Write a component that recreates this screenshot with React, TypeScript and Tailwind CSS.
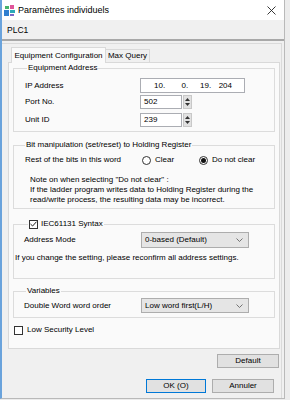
import React from 'react';

function Spin({ value }: { value: string }) {
  return (
    <div className="flex h-[14px]">
      <div className="w-[42px] h-full border border-[#abadb3] bg-white pl-[3px] flex items-center">{value}</div>
      <div className="w-[9px] h-full ml-[1px] bg-[#e1e1e1] border border-[#c8c8c8] flex flex-col items-center justify-center gap-[2px]">
        <svg width="5" height="3" viewBox="0 0 5 3"><path d="M0 3 L2.5 0 L5 3 Z" fill="#333" /></svg>
        <svg width="5" height="3" viewBox="0 0 5 3"><path d="M0 0 L2.5 3 L5 0 Z" fill="#333" /></svg>
      </div>
    </div>
  );
}

function Combo({ value, h = 'h-[16px]' }: { value: string; h?: string }) {
  return (
    <div className={`w-[108px] ${h} bg-[#e5e5e5] border border-[#adadad] flex items-center pl-[3px] pr-[5px]`}>
      <span className="flex-1">{value}</span>
      <svg width="7" height="4" viewBox="0 0 7 4"><polyline points="0.5,0.5 3.5,3.5 6.5,0.5" fill="none" stroke="#555" strokeWidth="0.8" /></svg>
    </div>
  );
}

function Check({ on }: { on: boolean }) {
  return (
    <div className="w-[9px] h-[9px] border border-[#333] bg-white flex items-center justify-center">
      {on && (
        <svg width="7" height="6" viewBox="0 0 7 6"><polyline points="0.5,3 2.6,5 6.5,0.7" fill="none" stroke="#222" strokeWidth="1" /></svg>
      )}
    </div>
  );
}

function Radio({ on }: { on: boolean }) {
  return (
    <div className="w-[9px] h-[9px] rounded-full border border-[#333] bg-white flex items-center justify-center">
      {on && <div className="w-[5px] h-[5px] rounded-full bg-[#111]" />}
    </div>
  );
}

export default function App() {
  const ip = ['10', '0', '19', '204'];
  return (
    <div className="w-[290px] h-[400px] bg-[#ececec] overflow-hidden font-['Liberation_Sans',Arial,sans-serif] text-[8px] leading-[10px] text-black">
      <div className="w-[285px] h-[399px] bg-[#f0f0f0] border-l-2 border-[#6aa3dc] border-r border-r-[#b9b9b9] border-b border-b-[#b9b9b9] flex flex-col">
        {/* title bar */}
        <div className="h-[20px] bg-white flex items-center">
          <svg width="11" height="11" viewBox="0 0 11 11" className="ml-[2px]">
            <rect x="0" y="5" width="5" height="6" fill="#2f7fd0" />
            <rect x="1" y="1" width="4" height="3" fill="#45b36b" />
            <rect x="6" y="0" width="4" height="4" fill="#e0559a" />
            <rect x="6" y="5" width="5" height="3" fill="#2aa9b8" />
            <rect x="6" y="9" width="4" height="2" fill="#7a68c8" />
          </svg>
          <span className="ml-[3px] text-[9px]">Paramètres individuels</span>
          <svg width="9" height="9" viewBox="0 0 9 9" className="ml-auto mr-[8px]">
            <path d="M0.5 0.5 L8.5 8.5 M8.5 0.5 L0.5 8.5" stroke="#222" strokeWidth="0.9" />
          </svg>
        </div>
        {/* PLC1 strip */}
        <div className="h-[19px] flex items-center pl-[5px] text-[8.5px]">PLC1</div>
        <div className="h-[2px] bg-[#a8a8a8]" />

        <div className="mt-[2px] mr-[2px] border-t border-r border-[#dadada] flex-1 flex flex-col pl-[6px] pr-[1px]">
          {/* tabs */}
          <div className="mt-[3px] ml-[3px] flex items-end h-[15px]">
            <div className="w-[95px] h-[16px] bg-[#fafafa] border border-b-0 border-[#d9d9d9] relative z-10 -mb-px flex items-center justify-center">
              Equipment Configuration
            </div>
            <div className="w-[44px] h-[13px] bg-[#f0f0f0] border border-l-0 border-b-0 border-[#d9d9d9] flex items-center justify-center">
              Max Query
            </div>
          </div>

          {/* tab panel */}
          <div className="w-[272px] h-[287px] bg-[#fafafa] border border-[#d9d9d9] pl-[4px] pr-[4px] flex flex-col">
            {/* Equipment Address */}
            <fieldset className="border border-[#dcdcdc] pl-[11px] pb-[4px]">
              <legend className="ml-[2px] px-[1px]">Equipment Address</legend>
              <div className="mt-[5px] flex items-center h-[15px]">
                <span className="w-[115px]">IP Address</span>
                <div className="w-[105px] h-[15px] border border-[#abadb3] bg-white flex items-center pl-[2px]">
                  {ip.map((v, i) => (
                    <div key={i} className="w-[23px] flex justify-end">
                      <span>{v}</span>
                      <span className="w-[3px]">{i < 3 ? '.' : ''}</span>
                    </div>
                  ))}
                </div>
              </div>
              <div className="mt-[2px] flex items-center">
                <span className="w-[115px]">Port No.</span>
                <Spin value="502" />
              </div>
              <div className="mt-[4px] flex items-center">
                <span className="w-[115px]">Unit ID</span>
                <Spin value="239" />
              </div>
            </fieldset>

            {/* Bit manipulation */}
            <fieldset className="mt-[8px] border border-[#dcdcdc] pl-[11px] pb-[3px]">
              <legend className="ml-[0px] px-[1px]">Bit manipulation (set/reset) to Holding Register</legend>
              <div className="mt-[4px] flex items-center h-[12px]">
                <span className="w-[117px]">Rest of the bits in this word</span>
                <Radio on={false} />
                <span className="ml-[4px] w-[44px]">Clear</span>
                <Radio on={true} />
                <span className="ml-[4px]">Do not clear</span>
              </div>
              <div className="mt-[9px] ml-[5px]">
                <div>Note on when selecting "Do not clear" :</div>
                <div>If the ladder program writes data to Holding Register during the</div>
                <div>read/write process, the resulting data may be incorrect.</div>
              </div>
            </fieldset>

            {/* IEC61131 */}
            <fieldset className="mt-[10px] border border-[#dcdcdc] pl-[10px] pb-[15px]">
              <legend className="ml-[4px] px-[1px] flex items-center gap-[3px]">
                <Check on={true} />
                <span>IEC61131 Syntax</span>
              </legend>
              <div className="mt-[3px] flex items-center">
                <span className="w-[117px]">Address Mode</span>
                <Combo value="0-based (Default)" />
              </div>
              <div className="mt-[5px] -ml-[10px] pl-[1px]">If you change the setting, please reconfirm all address settings.</div>
            </fieldset>

            {/* Variables */}
            <fieldset className="mt-[7px] border border-[#dcdcdc] pl-[10px] pb-[4px]">
              <legend className="ml-[2px] px-[1px]">Variables</legend>
              <div className="mt-[2px] flex items-center">
                <span className="w-[117px]">Double Word word order</span>
                <Combo value="Low word first(L/H)" h="h-[15px]" />
              </div>
            </fieldset>

            <div className="mt-[7px] ml-[1px] flex items-center gap-[4px] h-[10px]">
              <Check on={false} />
              <span>Low Security Level</span>
            </div>
          </div>

          {/* buttons */}
          <div className="mt-[5px] flex justify-end pr-[1px]">
            <div className="w-[62px] h-[14px] bg-[#e1e1e1] border border-[#adadad] flex items-center justify-center">Default</div>
          </div>
          <div className="mt-[11px] flex pl-[138px] gap-[6px]">
            <div className="w-[60px] h-[14px] bg-[#e1e1e1] border border-[#0078d7] flex items-center justify-center">OK (O)</div>
            <div className="w-[62px] h-[14px] bg-[#e1e1e1] border border-[#adadad] flex items-center justify-center">Annuler</div>
          </div>
        </div>
      </div>
    </div>
  );
}
